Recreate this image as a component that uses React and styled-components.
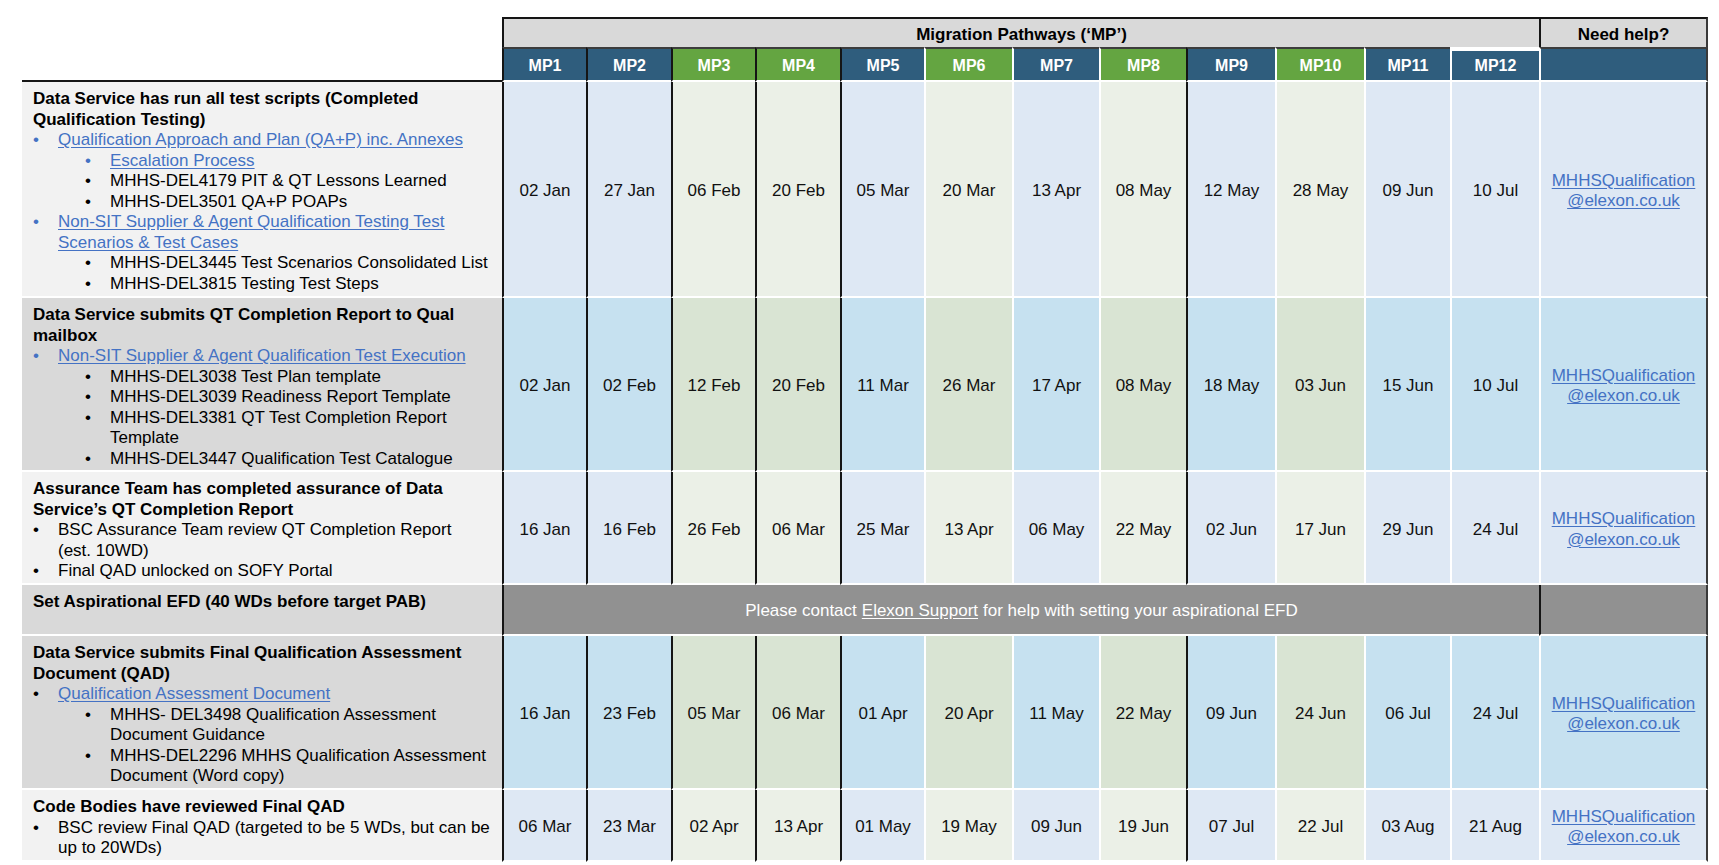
import React from "react";
import styled, { createGlobalStyle, css } from "styled-components";

const GlobalStyle = createGlobalStyle`
  html, body { margin: 0; padding: 0; background: #ffffff; }
  body { font-family: "Liberation Sans", Arial, sans-serif; color: #000; }
`;

const COLS = "480px 84px 85px 84px 85px 84px 88px 87px 87px 89px 89px 86px 89px 169px";
const INK = "#151515";
const LINK = "#4472C4";

const LABEL_BG = { light: "#F2F2F2", dark: "#D9D9D9" };
const FILL = {
  blue: { light: "#DEE8F4", dark: "#C6E1F0" },
  green: { light: "#EBF0E7", dark: "#D9E4D3" },
};
const HEAD_BG = { blue: "#2F5D7D", green: "#64A541" };
const LINE = { dark: INK, light: "#ffffff" };

const MPS = [
  { name: "MP1", kind: "blue", line: "dark" },
  { name: "MP2", kind: "blue", line: "dark" },
  { name: "MP3", kind: "green", line: "dark" },
  { name: "MP4", kind: "green", line: "dark" },
  { name: "MP5", kind: "blue", line: "dark" },
  { name: "MP6", kind: "green", line: "light" },
  { name: "MP7", kind: "blue", line: "light" },
  { name: "MP8", kind: "green", line: "light" },
  { name: "MP9", kind: "blue", line: "dark" },
  { name: "MP10", kind: "green", line: "light" },
  { name: "MP11", kind: "blue", line: "light" },
  { name: "MP12", kind: "blue", line: "light", raised: true },
];

const ROWS = [
  {
    height: 216,
    tone: "light",
    title: ["Data Service has run all test scripts (Completed", "Qualification Testing)"],
    items: [
      { level: 1, link: true, lines: ["Qualification Approach and Plan (QA+P) inc. Annexes"] },
      { level: 2, link: true, lines: ["Escalation Process"] },
      { level: 2, lines: ["MHHS-DEL4179 PIT & QT Lessons Learned"] },
      { level: 2, lines: ["MHHS-DEL3501 QA+P POAPs"] },
      { level: 1, link: true, lines: ["Non-SIT Supplier & Agent Qualification Testing Test", "Scenarios & Test Cases"] },
      { level: 2, lines: ["MHHS-DEL3445 Test Scenarios Consolidated List"] },
      { level: 2, lines: ["MHHS-DEL3815 Testing Test Steps"] },
    ],
    dates: ["02 Jan", "27 Jan", "06 Feb", "20 Feb", "05 Mar", "20 Mar", "13 Apr", "08 May", "12 May", "28 May", "09 Jun", "10 Jul"],
  },
  {
    height: 174,
    tone: "dark",
    title: ["Data Service submits QT Completion Report to Qual", "mailbox"],
    items: [
      { level: 1, link: true, lines: ["Non-SIT Supplier & Agent Qualification Test Execution"] },
      { level: 2, lines: ["MHHS-DEL3038 Test Plan template"] },
      { level: 2, lines: ["MHHS-DEL3039 Readiness Report Template"] },
      { level: 2, lines: ["MHHS-DEL3381 QT Test Completion Report", "Template"] },
      { level: 2, lines: ["MHHS-DEL3447 Qualification Test Catalogue"] },
    ],
    dates: ["02 Jan", "02 Feb", "12 Feb", "20 Feb", "11 Mar", "26 Mar", "17 Apr", "08 May", "18 May", "03 Jun", "15 Jun", "10 Jul"],
  },
  {
    height: 113,
    tone: "light",
    title: ["Assurance Team has completed assurance of Data", "Service\u2019s QT Completion Report"],
    items: [
      { level: 1, lines: ["BSC Assurance Team review QT Completion Report", "(est. 10WD)"] },
      { level: 1, lines: ["Final QAD unlocked on SOFY Portal"] },
    ],
    dates: ["16 Jan", "16 Feb", "26 Feb", "06 Mar", "25 Mar", "13 Apr", "06 May", "22 May", "02 Jun", "17 Jun", "29 Jun", "24 Jul"],
  },
  {
    height: 51,
    tone: "dark",
    band: true,
    title: ["Set Aspirational EFD (40 WDs before target PAB)"],
    items: [],
  },
  {
    height: 154,
    tone: "dark",
    title: ["Data Service submits Final Qualification Assessment", "Document (QAD)"],
    items: [
      { level: 1, link: true, plainBullet: true, lines: ["Qualification Assessment Document"] },
      { level: 2, lines: ["MHHS- DEL3498 Qualification Assessment", "Document Guidance"] },
      { level: 2, lines: ["MHHS-DEL2296 MHHS Qualification Assessment", "Document (Word copy)"] },
    ],
    dates: ["16 Jan", "23 Feb", "05 Mar", "06 Mar", "01 Apr", "20 Apr", "11 May", "22 May", "09 Jun", "24 Jun", "06 Jul", "24 Jul"],
  },
  {
    height: 72,
    tone: "light",
    title: ["Code Bodies have reviewed Final QAD"],
    items: [
      { level: 1, lines: ["BSC review Final QAD (targeted to be 5 WDs, but can be", "up to 20WDs)"] },
    ],
    dates: ["06 Mar", "23 Mar", "02 Apr", "13 Apr", "01 May", "19 May", "09 Jun", "19 Jun", "07 Jul", "22 Jul", "03 Aug", "21 Aug"],
  },
];

/* ---------- layout ---------- */

const Page = styled.div`
  padding: 17px 0 0 22px;
`;

const Table = styled.div`
  display: flex;
  flex-direction: column;
  width: 1686px;
`;

const Row = styled.div`
  display: grid;
  grid-template-columns: ${COLS};
  height: ${(p) => p.$h}px;
`;

/* ---------- header ---------- */

const Blank = styled.div`
  background: #ffffff;
  ${(p) =>
    p.$rule &&
    css`
      border-bottom: 2px solid ${INK};
    `}
`;

const GroupHead = styled.div`
  grid-column: span 12;
  display: flex;
  align-items: center;
  justify-content: center;
  background: #d9d9d9;
  border-top: 2px solid ${INK};
  border-left: 2px solid ${INK};
  font-weight: 700;
  font-size: 17px;
  padding-top: 3px;
`;

const HelpHead = styled.div`
  display: flex;
  align-items: center;
  justify-content: center;
  background: #d9d9d9;
  border-top: 2px solid ${INK};
  border-left: 2px solid ${INK};
  border-right: 2px solid #3a3a3a;
  font-weight: 700;
  font-size: 17px;
  padding-top: 3px;
`;

const MPHead = styled.div`
  display: flex;
  align-items: center;
  justify-content: center;
  background: ${(p) => HEAD_BG[p.$kind]};
  color: #ffffff;
  font-weight: 700;
  font-size: 16px;
  padding-top: ${(p) => (p.$raised ? 0 : 2)}px;
  border-top: ${(p) => (p.$raised ? "4px solid #ffffff" : "2px solid #3d3d3d")};
  border-bottom: 2px solid #ffffff;
  border-left: 2px solid ${(p) => LINE[p.$line]};
`;

const MPHelpBlank = styled.div`
  background: ${HEAD_BG.blue};
  border-top: 2px solid #3d3d3d;
  border-bottom: 2px solid #ffffff;
  border-left: 2px solid #ffffff;
  border-right: 2px solid #3a3a3a;
`;

/* ---------- body ---------- */

const LabelCell = styled.div`
  background: ${(p) => LABEL_BG[p.$tone]};
  border-bottom: 2px solid #ffffff;
  padding: 7px 2px 0 11px;
  font-size: 17px;
  line-height: 20.5px;
`;

const Title = styled.div`
  font-weight: 700;
`;

const List = styled.ul`
  list-style: none;
  margin: 0;
  padding: 0;
`;

const Item = styled.li`
  display: flex;
  margin-left: ${(p) => (p.$level === 2 ? 52 : 0)}px;
`;

const Bullet = styled.span`
  flex: 0 0 25px;
  color: ${(p) => (p.$blue ? LINK : "#000")};
`;

const ItemText = styled.span`
  flex: 1 1 auto;
`;

const DocLink = styled.a`
  color: ${LINK};
  text-decoration: underline;
  text-underline-offset: 2px;
`;

const DateCell = styled.div`
  display: flex;
  align-items: center;
  justify-content: center;
  padding-top: 4px;
  background: ${(p) => FILL[p.$kind][p.$tone]};
  border-left: 2px solid ${(p) => LINE[p.$line]};
  border-bottom: 2px solid #ffffff;
  font-size: 17px;
  color: #111;
`;

const HelpCell = styled.div`
  display: flex;
  align-items: center;
  justify-content: center;
  text-align: center;
  padding-top: 4px;
  background: ${(p) => FILL.blue[p.$tone]};
  border-left: 2px solid #ffffff;
  border-right: 2px solid #3a3a3a;
  border-bottom: 2px solid #ffffff;
  font-size: 17px;
  line-height: 20.5px;
`;

const MailLink = styled.a`
  color: ${LINK};
  text-decoration: underline;
  text-underline-offset: 2px;
`;

const Band = styled.div`
  grid-column: span 12;
  display: flex;
  align-items: center;
  justify-content: center;
  padding-top: 2px;
  background: #919191;
  color: #ffffff;
  border-left: 2px solid ${INK};
  border-bottom: 2px solid #ffffff;
  font-size: 17px;
`;

const BandLink = styled.a`
  color: #ffffff;
  text-decoration: underline;
  text-underline-offset: 2px;
  margin: 0 5px;
`;

const BandHelp = styled.div`
  background: #919191;
  border-left: 2px solid ${INK};
  border-right: 2px solid #3a3a3a;
  border-bottom: 2px solid #ffffff;
`;

/* ---------- pieces ---------- */

function Lines({ lines }) {
  return lines.map((l, i) => (
    <React.Fragment key={i}>
      {i > 0 && <br />}
      {l}
    </React.Fragment>
  ));
}

function Label({ row }) {
  return (
    <LabelCell $tone={row.tone}>
      <Title>
        <Lines lines={row.title} />
      </Title>
      {row.items.length > 0 && (
        <List>
          {row.items.map((it, i) => (
            <Item key={i} $level={it.level}>
              <Bullet $blue={it.link && !it.plainBullet}>•</Bullet>
              <ItemText>
                {it.link ? (
                  <DocLink href="#">
                    <Lines lines={it.lines} />
                  </DocLink>
                ) : (
                  <Lines lines={it.lines} />
                )}
              </ItemText>
            </Item>
          ))}
        </List>
      )}
    </LabelCell>
  );
}

export default function App() {
  return (
    <>
      <GlobalStyle />
      <Page>
        <Table>
          <Row $h={30}>
            <Blank />
            <GroupHead>Migration Pathways (‘MP’)</GroupHead>
            <HelpHead>Need help?</HelpHead>
          </Row>
          <Row $h={35}>
            <Blank $rule />
            {MPS.map((mp) => (
              <MPHead key={mp.name} $kind={mp.kind} $line={mp.line} $raised={mp.raised}>
                {mp.name}
              </MPHead>
            ))}
            <MPHelpBlank />
          </Row>
          {ROWS.map((row, r) =>
            row.band ? (
              <Row key={r} $h={row.height}>
                <Label row={row} />
                <Band>
                  Please contact<BandLink href="#">Elexon Support</BandLink>for help with setting your aspirational EFD
                </Band>
                <BandHelp />
              </Row>
            ) : (
              <Row key={r} $h={row.height}>
                <Label row={row} />
                {row.dates.map((d, i) => (
                  <DateCell key={i} $kind={MPS[i].kind} $line={MPS[i].line} $tone={row.tone}>
                    {d}
                  </DateCell>
                ))}
                <HelpCell $tone={row.tone}>
                  <MailLink href="#">
                    MHHSQualification
                    <br />
                    @elexon.co.uk
                  </MailLink>
                </HelpCell>
              </Row>
            )
          )}
        </Table>
      </Page>
    </>
  );
}
